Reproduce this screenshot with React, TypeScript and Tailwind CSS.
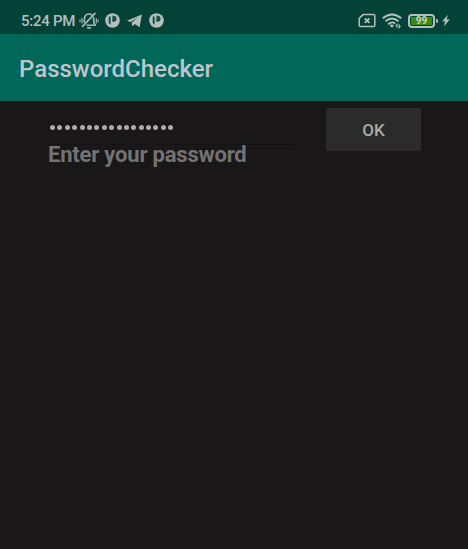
import React from "react";

function BellOff() {
  return (
    <svg className="ml-[3px] block" width="20" height="20" viewBox="0 0 20 20" fill="none" stroke="#a9b8b5" strokeWidth="1.6" strokeLinecap="round" strokeLinejoin="round">
      <path d="M5.3 9C5.3 5 7 3 10 3c1.2 0 2 .3 2.8.9M14.5 6.5c.3 1 .3 2 .3 5.2l1.5 2.5H8M5.3 9v2" />
      <path d="M8.9 16.8h2.4" strokeWidth="1.8" />
      <path d="M16 2.3L3.5 15.3" strokeWidth="1.7" />
      <path d="M3 7.5v4.5M17.3 7.5v4.5" strokeWidth="1.2" />
      <path d="M1 8.8v2M19.2 8.8v2" strokeWidth="1.1" />
    </svg>
  );
}

function PBadge() {
  return (
    <svg className="block" width="15" height="15" viewBox="0 0 15 15">
      <circle cx="7.5" cy="7.5" r="7.3" fill="#b4bfbd" />
      <path d="M3.7 3.4h1.9v8.3L3.7 10zM7.3 2.7h1.2a3 3 0 0 1 0 6H7.3z" fill="#144b42" />
      <path d="M7.3 4.2h1.2" stroke="#b4bfbd" strokeWidth=".6" />
    </svg>
  );
}

function Plane() {
  return (
    <svg className="block" width="15" height="14" viewBox="0 0 15 14">
      <path d="M14.9.5L12.6 13.2 7.8 9.9 5.3 12.3 4.7 8.6 11.2 3.2 3.3 8 0 6.7z" fill="#b4bfbd" />
    </svg>
  );
}

function SimOff() {
  return (
    <svg className="block" width="18" height="15" viewBox="0 0 18 15" fill="none" stroke="#b4bfbd" strokeWidth="1.5" strokeLinejoin="round">
      <path d="M5 1.6h10.5q1.3 0 1.3 1.3v9.4q0 1.3-1.3 1.3h-13q-1.3 0-1.3-1.3V5.4z" />
      <path d="M6.8 5.3l4.6 4.6M11.4 5.3L6.8 9.9" strokeWidth="1.8" />
    </svg>
  );
}

function Wifi() {
  return (
    <svg className="block" width="20" height="16" viewBox="0 0 20 16" fill="none" stroke="#b4bfbd" strokeWidth="1.9">
      <path d="M.8 5.3Q10-2.5 19.2 5.3" />
      <path d="M3.5 8.3Q10 2.7 16.5 8.3" />
      <path d="M6.2 11.2Q10 7.9 13.2 10.6" />
      <path d="M7.6 12.4Q10 10.5 12 12.4L10 14.8z" fill="#b4bfbd" stroke="none" />
      <path d="M15 14.8v-3.3l-1.3 1.5M17.2 11.3v3.3l1.3-1.5" strokeWidth="1.1" />
    </svg>
  );
}

function Battery() {
  return (
    <div className="flex items-center">
      <div className="flex h-[14px] w-[27px] rounded-[4px] border-2 border-[#b4bfbd] p-px">
        <div className="flex flex-1 items-center justify-center rounded-[1px] bg-[#3b8a10] text-[10px] leading-none font-bold text-[#c8d3bd]">99</div>
      </div>
      <div className="ml-px h-[4px] w-[2px] rounded-r-[1px] bg-[#a3b5b0]" />
    </div>
  );
}

function StatusBar() {
  return (
    <header className="flex h-[34px] items-center bg-[#044238] pt-[7px] pr-[18px] pl-[21px] text-[#b4bfbd]">
      <span className="w-[55px] text-[15px] leading-5 font-medium tracking-[-0.25px] whitespace-nowrap">5:24 PM</span>
      <BellOff />
      <div className="ml-[6px] flex items-center gap-[7px]">
        <PBadge />
        <Plane />
        <PBadge />
      </div>
      <div className="ml-auto flex items-center">
        <SimOff />
        <div className="ml-[6px]"><Wifi /></div>
        <div className="ml-[6px]"><Battery /></div>
        <svg className="ml-[4px] block" width="8" height="13" viewBox="0 0 9 13">
          <path d="M6.6 0L.2 7.4h3.1L2.3 13 8.8 5.3H5.3z" fill="#b4bfbd" />
        </svg>
      </div>
    </header>
  );
}

const dots = Array.from({ length: 17 }, (_, i) => i);

export default function App() {
  return (
    <div className="flex h-[549px] w-[468px] flex-col overflow-hidden bg-[#191718] font-['Roboto',sans-serif]">
      <StatusBar />
      <div className="flex h-[67px] items-center bg-[#006759] pl-[19px]">
        <h1 className="pt-[3px] text-[24px] leading-8 font-medium text-[#bfc5cf]">PasswordChecker</h1>
      </div>
      <main className="flex items-start pt-[7px] pl-[48px]">
        <div className="w-[246px]">
          <div className="flex h-[37px] items-center gap-[2.4px] border-b border-[#151314] pt-[2px] pl-[2px]">
            {dots.map((d) => (
              <span key={d} className="h-[5px] w-[5px] shrink-0 rounded-full bg-[#aaaaaa]" />
            ))}
          </div>
          <p className="-mt-[3px] text-[22px] leading-[26px] font-bold tracking-[-0.2px] whitespace-nowrap text-[#737373]">Enter your password</p>
        </div>
        <button className="ml-[32px] flex h-[43px] w-[95px] items-center justify-center rounded-[2px] bg-[#2b2b2b] pt-[2px] text-[17px] font-medium tracking-[-0.1px] text-[#aaaaaa]">OK</button>
      </main>
    </div>
  );
}
